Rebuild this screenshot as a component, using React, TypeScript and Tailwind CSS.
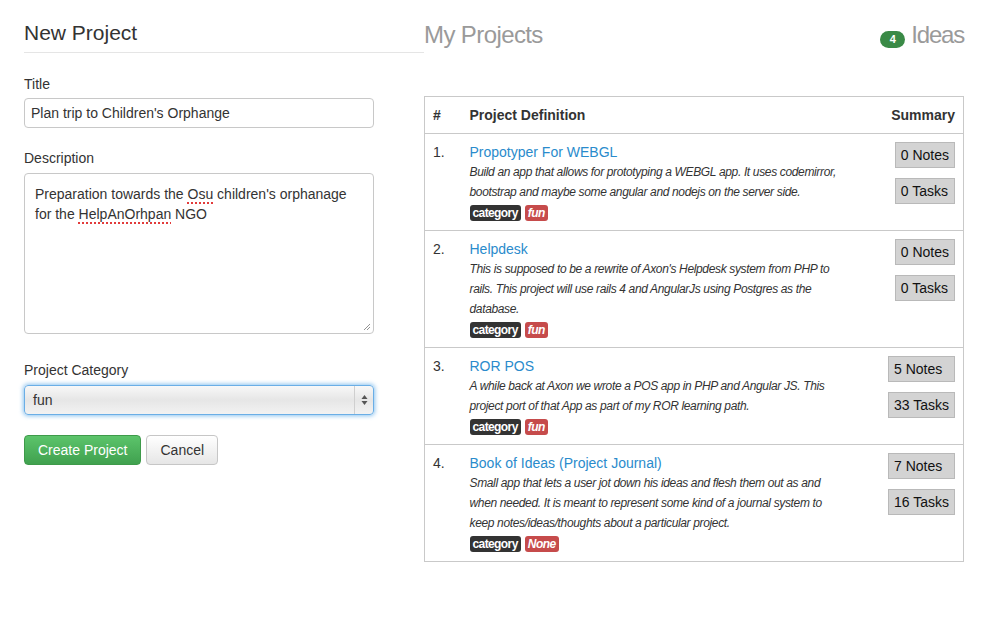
import React from "react";

type Project = {
  n: number;
  title: string;
  lines: string[];
  cat: string;
  notes: string;
  tasks: string;
};

const projects: Project[] = [
  {
    n: 1,
    title: "Propotyper For WEBGL",
    lines: [
      "Build an app that allows for prototyping a WEBGL app. It uses codemirror,",
      "bootstrap and maybe some angular and nodejs on the server side.",
    ],
    cat: "fun",
    notes: "0 Notes",
    tasks: "0 Tasks",
  },
  {
    n: 2,
    title: "Helpdesk",
    lines: [
      "This is supposed to be a rewrite of Axon's Helpdesk system from PHP to",
      "rails. This project will use rails 4 and AngularJs using Postgres as the",
      "database.",
    ],
    cat: "fun",
    notes: "0 Notes",
    tasks: "0 Tasks",
  },
  {
    n: 3,
    title: "ROR POS",
    lines: [
      "A while back at Axon we wrote a POS app in PHP and Angular JS. This",
      "project port of that App as part of my ROR learning path.",
    ],
    cat: "fun",
    notes: "5 Notes",
    tasks: "33 Tasks",
  },
  {
    n: 4,
    title: "Book of Ideas (Project Journal)",
    lines: [
      "Small app that lets a user jot down his ideas and flesh them out as and",
      "when needed. It is meant to represent some kind of a journal system to",
      "keep notes/ideas/thoughts about a particular project.",
    ],
    cat: "None",
    notes: "7 Notes",
    tasks: "16 Tasks",
  },
];

function SumBtn({ children }: { children: React.ReactNode }) {
  return (
    <div className="border border-[#b9b9b9] bg-[#d3d3d3] px-[5px] py-[2px] text-left text-[14px] leading-[20px] text-[#111] whitespace-nowrap">
      {children}
    </div>
  );
}

export default function App() {
  return (
    <div
      className="min-h-[627px] w-[989px] bg-white text-[#333]"
      style={{ fontFamily: '"Liberation Sans", Arial, Helvetica, sans-serif' }}
    >
      <div className="flex pl-[24px]">
        {/* Left column */}
        <div className="w-[400px] pt-[20px]">
          <h3 className="border-b border-[#e5e5e5] pb-[6px] text-[21px] leading-[26px] font-normal text-[#333]">
            New Project
          </h3>

          <div className="mt-[21px] text-[14px] leading-[20px]">Title</div>
          <div className="mt-[4px] flex h-[30px] w-[350px] items-center rounded-[4px] border border-[#c8c8c8] bg-white px-[6px] text-[14px] text-[#333]">
            Plan trip to Children's Orphange
          </div>

          <div className="mt-[20px] text-[14px] leading-[20px]">Description</div>
          <div className="relative mt-[5px] h-[161px] w-[350px] rounded-[4px] border border-[#c8c8c8] bg-white px-[10px] pt-[10px] text-[14px] leading-[20px] text-[#333]">
            <div>
              Preparation towards the{" "}
              <span className="underline decoration-dotted decoration-[#e23b3b] decoration-2 underline-offset-[3px]">
                Osu
              </span>{" "}
              children's orphanage
            </div>
            <div>
              for the{" "}
              <span className="underline decoration-dotted decoration-[#e23b3b] decoration-2 underline-offset-[3px]">
                HelpAnOrhpan
              </span>{" "}
              NGO
            </div>
            <svg
              className="absolute bottom-[2px] right-[2px]"
              width="8"
              height="8"
              viewBox="0 0 8 8"
            >
              <line x1="7" y1="1" x2="1" y2="7" stroke="#888" strokeWidth="0.9" />
              <line x1="7" y1="4" x2="4" y2="7" stroke="#888" strokeWidth="0.9" />
            </svg>
          </div>

          <div className="mt-[26px] text-[14px] leading-[20px]">Project Category</div>
          <div className="mt-[5px] flex h-[30px] w-[350px] items-stretch rounded-[4px] border border-[#6aaee6] bg-gradient-to-b from-[#f8f8f8] via-[#e6e6e6] to-[#f2f2f2] shadow-[0_0_4px_1px_rgba(102,175,233,0.75)]">
            <div className="flex flex-1 items-center pl-[8px] text-[14px] text-[#333]">fun</div>
            <div className="flex w-[19px] items-center justify-center border-l border-[#cfcfcf]">
              <svg width="7" height="12" viewBox="0 0 7 12">
                <path d="M3.5 1 L6.5 5 L0.5 5 Z" fill="#555" />
                <path d="M3.5 11 L6.5 7 L0.5 7 Z" fill="#555" />
              </svg>
            </div>
          </div>

          <div className="mt-[20px] flex gap-[5px]">
            <div className="flex h-[30px] items-center rounded-[4px] border border-[#3e9a4a] bg-gradient-to-b from-[#5cc46b] to-[#40a14f] px-[13px] text-[14px] text-white">
              Create Project
            </div>
            <div className="flex h-[30px] items-center rounded-[4px] border border-[#c6c6c6] bg-gradient-to-b from-[#ffffff] to-[#e6e6e6] px-[13px] text-[14px] text-[#333]">
              Cancel
            </div>
          </div>
        </div>

        {/* Right column */}
        <div className="w-[540px] pt-[20px]">
          <div className="flex items-center justify-between">
            <div className="text-[24px] leading-[30px] tracking-[-0.6px] text-[#9a9a9a]">
              My Projects
            </div>
            <div className="flex items-center">
              <span className="mt-[8px] flex h-[17px] w-[25px] items-center justify-center rounded-full bg-[#3a8a46] text-[11px] font-bold text-white">
                4
              </span>
              <span className="ml-[6px] text-[24px] leading-[30px] tracking-[-1.2px] text-[#9a9a9a]">
                Ideas
              </span>
            </div>
          </div>

          <table className="mt-[46px] w-[540px] border-collapse border border-[#c9c9c9] text-[14px]">
            <thead>
              <tr className="border-b border-[#c9c9c9]">
                <th className="w-[37px] px-[8px] py-[8px] text-left text-[14px] leading-[20px] font-bold text-[#333]">
                  #
                </th>
                <th className="px-[8px] py-[8px] text-left text-[14px] leading-[20px] font-bold text-[#333]">
                  Project Definition
                </th>
                <th className="w-[84px] px-[8px] py-[8px] text-right text-[14px] leading-[20px] font-bold text-[#333]">
                  Summary
                </th>
              </tr>
            </thead>
            <tbody>
              {projects.map((p) => (
                <tr key={p.n} className="border-b border-[#c9c9c9] align-top">
                  <td className="px-[8px] pt-[8px] leading-[20px] text-[#333]">{p.n}.</td>
                  <td className="px-[8px] pt-[8px] pb-[9px]">
                    <div className="text-[14px] leading-[20px] text-[#2a8bcc]">{p.title}</div>
                    <div className="text-[12px] leading-[20px] italic tracking-[-0.35px] text-[#333]">
                      {p.lines.map((l, i) => (
                        <div key={i} className="whitespace-nowrap">
                          {l}
                        </div>
                      ))}
                    </div>
                    <div className="mt-[3px] flex gap-[4px]">
                      <span className="rounded-[3px] bg-[#333] px-[3px] text-[12px] leading-[16px] font-bold tracking-[-0.6px] text-white">
                        category
                      </span>
                      <span className="rounded-[3px] bg-[#c64b4b] px-[3px] text-[12px] leading-[16px] font-bold italic tracking-[-0.5px] text-white">
                        {p.cat}
                      </span>
                    </div>
                  </td>
                  <td className="px-[8px] pt-[8px] text-right">
                    <div className="inline-flex flex-col items-stretch gap-[10px]">
                      <SumBtn>{p.notes}</SumBtn>
                      <SumBtn>{p.tasks}</SumBtn>
                    </div>
                  </td>
                </tr>
              ))}
            </tbody>
          </table>
        </div>
      </div>
    </div>
  );
}
